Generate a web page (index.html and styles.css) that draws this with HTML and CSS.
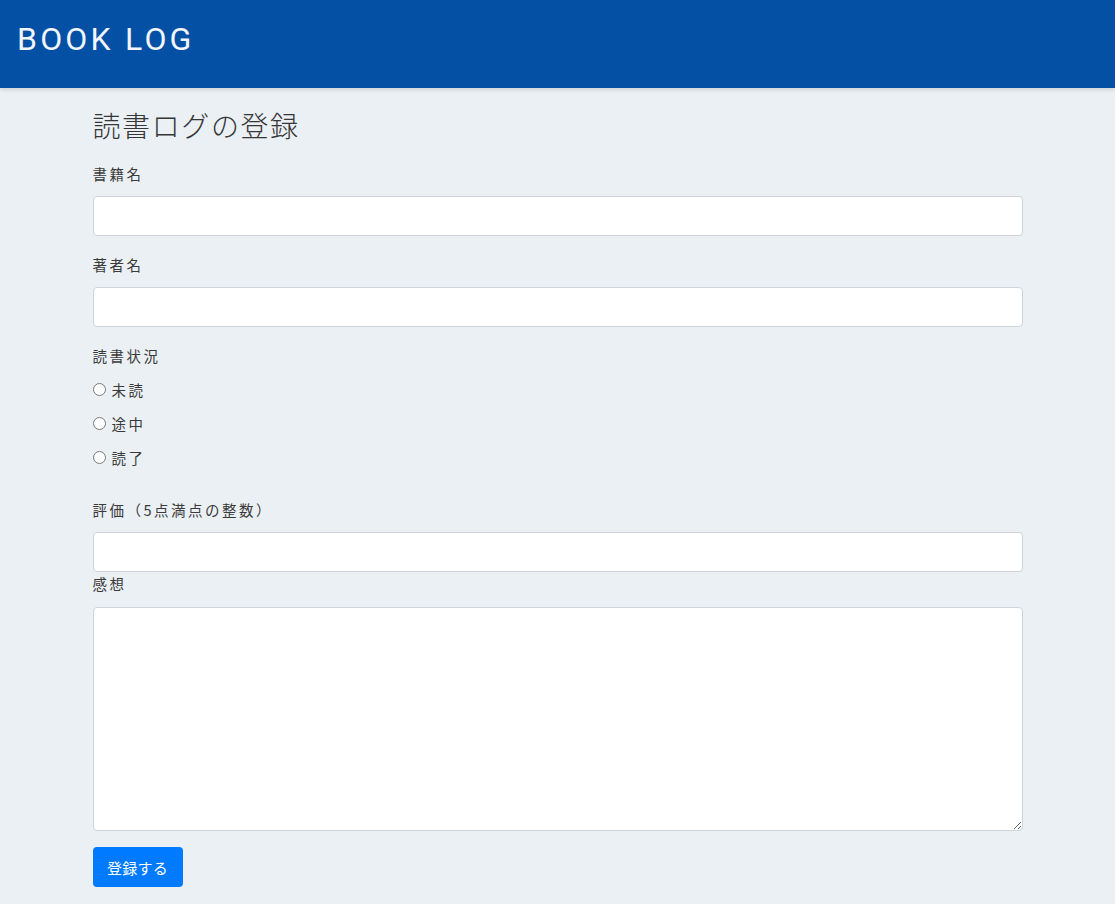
FILE: index.html
```html
<!DOCTYPE html>
<html lang="ja">
<head>
<meta charset="utf-8">
<title>BOOK LOG</title>
<link rel="stylesheet" href="styles.css">
</head>
<body>
<header class="site-header">
  <div class="brand">BOOK LOG</div>
</header>
<main class="container">
  <h1 class="page-title">読書ログの登録</h1>
  <form class="log-form">
    <div class="form-group">
      <label class="field-label" for="title">書籍名</label>
      <input class="form-control" type="text" id="title">
    </div>
    <div class="form-group">
      <label class="field-label" for="author">著者名</label>
      <input class="form-control" type="text" id="author">
    </div>
    <div class="form-group status-group">
      <div class="field-label radio-heading">読書状況</div>
      <label class="radio-row"><input type="radio" name="status" class="radio"><span>未読</span></label>
      <label class="radio-row"><input type="radio" name="status" class="radio"><span>途中</span></label>
      <label class="radio-row"><input type="radio" name="status" class="radio"><span>読了</span></label>
    </div>
    <div class="rating-group">
      <label class="field-label" for="rating">評価（5点満点の整数）</label>
      <input class="form-control" type="text" id="rating">
    </div>
    <div class="form-group">
      <label class="field-label impression-label" for="impression">感想</label>
      <textarea class="form-control textarea" id="impression"></textarea>
    </div>
    <button type="button" class="btn-submit">登録する</button>
  </form>
</main>
</body>
</html>
```
FILE: styles.css
```css
* { box-sizing: border-box; }
html, body { margin: 0; padding: 0; }
body {
  background: #ebf0f5;
  color: #333;
  font-family: "Noto Sans CJK JP", "Noto Sans", sans-serif;
  height: 904px;
  overflow: hidden;
}
.site-header {
  height: 88px;
  background: #0350a4;
  box-shadow: 0 2px 4px rgba(0, 0, 0, 0.12);
  padding: 15px 17px 0;
}
.brand {
  font-family: Roboto, "Liberation Sans", sans-serif;
  font-size: 32px;
  line-height: 48px;
  letter-spacing: 3.2px;
  color: #f2f5fb;
}
.container {
  width: 930px;
  margin: 0 auto;
}
.page-title {
  margin: 17px 0 16px;
  font-size: 28px;
  line-height: 40px;
  font-weight: 300;
  letter-spacing: 1.6px;
  color: #363636;
}
.form-group { margin-bottom: 16px; }
.field-label {
  display: block;
  font-size: 14.5px;
  line-height: 26px;
  letter-spacing: 2.5px;
  margin-bottom: 9px;
  color: #3a3a3a;
}
.form-control {
  display: block;
  width: 100%;
  height: 40px;
  background: #fff;
  border: 1px solid #ced4da;
  border-radius: 4px;
  font-size: 15px;
  padding: 6px 12px;
}
.textarea {
  height: 224px;
}
.status-group { margin-bottom: 0; }
.radio-heading { margin-bottom: 3px; }
.radio-row {
  display: flex;
  align-items: center;
  height: 34px;
  font-size: 14.5px;
  letter-spacing: 2.5px;
  color: #3a3a3a;
}
.radio {
  margin: 0 6px 0 0;
  width: 13px;
  height: 13px;
}
.rating-group { margin-top: 23px; }
.impression-label {
  margin-top: -1px;
  margin-bottom: 10px;
}
.btn-submit {
  display: block;
  width: 90px;
  height: 40px;
  margin-top: 1px;
  background: #007bff;
  color: #fff;
  border: none;
  border-radius: 4px;
  font-family: "Noto Sans CJK JP", sans-serif;
  font-size: 15px;
  letter-spacing: 0.3px;
  padding: 0;
}
```
